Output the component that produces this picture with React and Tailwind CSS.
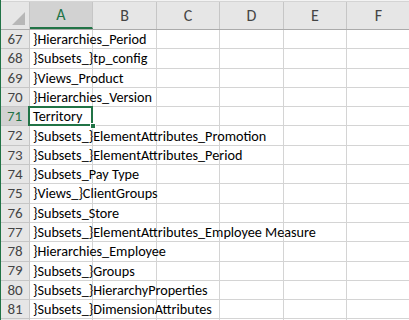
import React from "react";

const rows = [
  [67, "}Hierarchies_Period"],
  [68, "}Subsets_}tp_config"],
  [69, "}Views_Product"],
  [70, "}Hierarchies_Version"],
  [71, "Territory"],
  [72, "}Subsets_}ElementAttributes_Promotion"],
  [73, "}Subsets_}ElementAttributes_Period"],
  [74, "}Subsets_Pay Type"],
  [75, "}Views_}ClientGroups"],
  [76, "}Subsets_Store"],
  [77, "}Subsets_}ElementAttributes_Employee Measure"],
  [78, "}Hierarchies_Employee"],
  [79, "}Subsets_}Groups"],
  [80, "}Subsets_}HierarchyProperties"],
  [81, "}Subsets_}DimensionAttributes"],
  [82, ""],
];

const cols = ["A", "B", "C", "D", "E", "F"];
const colW = ["w-[63px]", "w-[64px]", "w-[63px]", "w-[64px]", "w-[63px]", "w-[64px]"];

export default function App() {
  return (
    <div
      className="w-[409px] h-[320px] overflow-hidden bg-white border-l border-[#217346] relative"
      style={{ fontFamily: "Carlito, Lato, 'Liberation Sans', sans-serif" }}
    >
      <div className="h-[2px] bg-[#f3f3f3] border-b border-[#d4d4d4]"></div>
      <div className="flex h-[28px] bg-[#e6e6e6] border-b border-[#ababab]">
        <div className="w-[29px] shrink-0 border-r border-[#c6c6c6] relative">
          <svg className="absolute right-[4px] bottom-[4px]" width="13" height="13" viewBox="0 0 13 13">
            <polygon points="13,0 13,13 0,13" fill="#b7b7b7" />
          </svg>
        </div>
        {cols.map((c, i) => (
          <div
            key={c}
            className={`${colW[i]} shrink-0 flex items-center justify-center text-[16px] border-r border-[#c6c6c6] ${
              i === 0 ? "bg-[#d2d2d2] text-[#217346] border-b-2 border-b-[#217346]" : "text-[#444444]"
            }`}
          >
            {c}
          </div>
        ))}
      </div>
      {rows.map(([n, t]) => {
        const sel = n === 71;
        return (
          <div key={n} className="flex h-[19.3px]">
            <div
              className={`w-[29px] shrink-0 flex items-center justify-center text-[15px] border-b border-[#c6c6c6] ${
                sel ? "bg-[#d2d2d2] text-[#217346] border-r-2 border-r-[#217346]" : "bg-[#e6e6e6] text-[#444444] border-r border-r-[#c6c6c6]"
              }`}
            >
              {n === 82 ? "" : n}
            </div>
            {cols.map((c, i) => (
              <div
                key={c}
                className={`${colW[i]} shrink-0 relative border-b border-r border-[#d4d4d4]`}
              >
                {i === 0 && t && (
                  <span className="absolute left-[3px] top-0 h-full flex items-center text-[14.2px] text-black whitespace-nowrap z-10 leading-none">
                    {t}
                  </span>
                )}
                {i === 0 && sel && (
                  <>
                    <div className="absolute left-[-2px] top-[-1px] right-[-1px] bottom-[-1px] border-2 border-[#217346] z-20"></div>
                    <div className="absolute right-[-4px] bottom-[-4px] w-[6px] h-[6px] bg-[#217346] border border-white z-30"></div>
                  </>
                )}
              </div>
            ))}
          </div>
        );
      })}
    </div>
  );
}
